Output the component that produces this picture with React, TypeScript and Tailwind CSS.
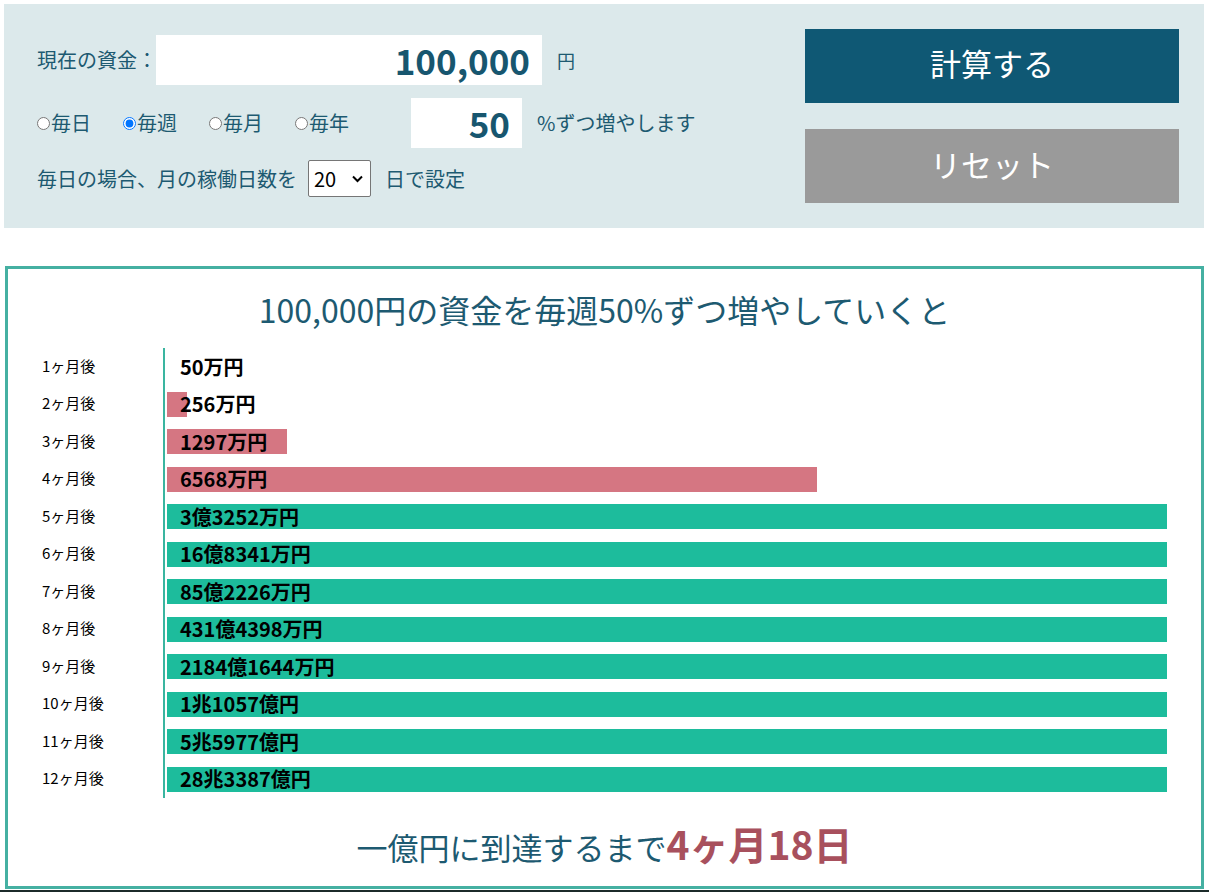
import React from "react";

const rows = [
  { id: 1, label: "1ヶ月後", value: "50万円", width: 0, color: "bg-[#d57682]" },
  { id: 2, label: "2ヶ月後", value: "256万円", width: 20, color: "bg-[#d57682]" },
  { id: 3, label: "3ヶ月後", value: "1297万円", width: 120, color: "bg-[#d57682]" },
  { id: 4, label: "4ヶ月後", value: "6568万円", width: 650, color: "bg-[#d57682]" },
  { id: 5, label: "5ヶ月後", value: "3億3252万円", width: 1000, color: "bg-[#1dbc9c]" },
  { id: 6, label: "6ヶ月後", value: "16億8341万円", width: 1000, color: "bg-[#1dbc9c]" },
  { id: 7, label: "7ヶ月後", value: "85億2226万円", width: 1000, color: "bg-[#1dbc9c]" },
  { id: 8, label: "8ヶ月後", value: "431億4398万円", width: 1000, color: "bg-[#1dbc9c]" },
  { id: 9, label: "9ヶ月後", value: "2184億1644万円", width: 1000, color: "bg-[#1dbc9c]" },
  { id: 10, label: "10ヶ月後", value: "1兆1057億円", width: 1000, color: "bg-[#1dbc9c]" },
  { id: 11, label: "11ヶ月後", value: "5兆5977億円", width: 1000, color: "bg-[#1dbc9c]" },
  { id: 12, label: "12ヶ月後", value: "28兆3387億円", width: 1000, color: "bg-[#1dbc9c]" },
];

const periods = [
  { id: "day", name: "毎日", checked: false },
  { id: "week", name: "毎週", checked: true },
  { id: "month", name: "毎月", checked: false },
  { id: "year", name: "毎年", checked: false },
];

const App = () => {
  return (
    <div className="w-[1209px] min-h-[892px] bg-white font-['Noto_Sans_CJK_JP',sans-serif] text-[#1d5a71] overflow-hidden">
      <div className="pt-[4px] pl-[4px] pr-[5px]">
        {/* input panel */}
        <div className="h-[224px] bg-[#dce9eb] flex justify-between">
          <div className="pl-[33px] pt-[31px]">
            <div className="flex items-center h-[50px]">
              <span className="text-[20px] w-[119px] whitespace-nowrap">現在の資金：</span>
              <input
                readOnly
                value="100,000"
                className="w-[386px] h-[50px] bg-white text-right pr-[12px] text-[35px] font-bold text-[#17566f] outline-none"
              />
              <span className="ml-[15px] text-[18px]">円</span>
            </div>
            <div className="flex items-center h-[50px] mt-[13px]">
              <div className="flex items-center w-[374px]">
                {periods.map((p) => (
                  <label key={p.id} className="w-[86px] flex items-center text-[20px] whitespace-nowrap">
                    <input type="radio" name="period" defaultChecked={p.checked} className="w-[13px] h-[13px] mr-[1px]" />
                    {p.name}
                  </label>
                ))}
              </div>
              <input
                readOnly
                value="50"
                className="w-[111px] h-[50px] bg-white text-right pr-[12px] text-[35px] font-bold text-[#17566f] outline-none"
              />
              <span className="ml-[15px] text-[20px] whitespace-nowrap">%ずつ増やします</span>
            </div>
            <div className="flex items-center h-[37px] mt-[12px]">
              <span className="text-[20px] whitespace-nowrap">毎日の場合、月の稼働日数を</span>
              <div className="relative ml-[11px]">
                <select
                  defaultValue="20"
                  className="appearance-none w-[63px] h-[37px] bg-white border border-[#767676] rounded-[2px] pl-[5px] text-[20px] text-black outline-none"
                >
                  {Array.from({ length: 31 }, (_, i) => i + 1).map((n) => (
                    <option key={n} value={String(n)}>
                      {n}
                    </option>
                  ))}
                </select>
                <svg
                  className="absolute right-[8px] top-[15px] pointer-events-none"
                  width="11"
                  height="8"
                  viewBox="0 0 11 8"
                  fill="none"
                  stroke="#000"
                  strokeWidth="2"
                >
                  <path d="M1 1.5 L5.5 6 L10 1.5" />
                </svg>
              </div>
              <span className="ml-[14px] text-[20px] whitespace-nowrap">日で設定</span>
            </div>
          </div>
          <div className="pt-[25px] pr-[25px] flex flex-col gap-[26px]">
            <button className="w-[374px] h-[74px] bg-[#0f5874] text-white text-[31px] pb-[6px]">計算する</button>
            <button className="w-[374px] h-[74px] bg-[#9a9a9a] text-white text-[31px] pb-[4px]">リセット</button>
          </div>
        </div>
      </div>

      {/* result */}
      <div className="mt-[38px] ml-[5px] mr-[5px] border-[3px] border-[#45b0a2] pt-[20px] pb-[15px]">
        <h1 className="text-center text-[32px] leading-[40px] text-[#1d5a71]">
          100,000円の資金を毎週50%ずつ増やしていくと
        </h1>
        <div className="flex mt-[19px]">
          <div className="w-[155px] pl-[34px]">
            {rows.map((r) => (
              <div key={r.id} className="h-[37.5px] flex items-center pb-[2px] text-[15px] text-black whitespace-nowrap">
                {r.label}
              </div>
            ))}
          </div>
          <div className="w-[2px] bg-[#3ab5a0]"></div>
          <div className="ml-[2px] w-[1000px]">
            {rows.map((r) => (
              <div key={r.id} className="h-[37.5px] flex items-center">
                <div className="relative h-[25px] w-full flex items-center">
                  <div className={`absolute left-0 top-0 h-full ${r.color}`} style={{ width: r.width }}></div>
                  <span className="relative pl-[13px] text-[20px] font-bold text-black whitespace-nowrap">{r.value}</span>
                </div>
              </div>
            ))}
          </div>
        </div>
        <p className="mt-[21px] text-center text-[31px] leading-[48px] text-[#1d5a71]">
          一億円に到達するまで
          <span className="text-[39px] font-bold text-[#a8505d]">4ヶ月18日</span>
        </p>
      </div>
      <div className="mt-[1px] h-[10px] bg-[#1c2b2a]"></div>
    </div>
  );
};

export default App;
